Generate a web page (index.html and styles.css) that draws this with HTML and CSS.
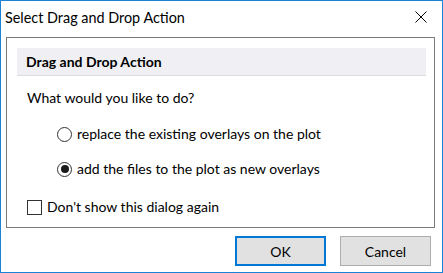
FILE: index.html
```html
<!DOCTYPE html>
<html lang="en">

<head>
  <meta charset="UTF-8">
  <title>Select Drag and Drop Action</title>
  <link rel="stylesheet" href="styles.css">
</head>

<body>
  <div class="window">
    <div class="titlebar">
      <span class="title">Select Drag and Drop Action</span>
      <svg class="close" width="12" height="12" viewBox="0 0 12 12">
        <path d="M0.5 0.5 L11.5 11.5 M11.5 0.5 L0.5 11.5" stroke="#000" stroke-width="1" fill="none" />
      </svg>
    </div>
    <div class="content">
      <div class="group">
        <div class="group-head">Drag and Drop Action</div>
        <p class="question">What would you like to do?</p>
        <label class="option first"><span class="radio"></span>replace the existing overlays on the plot</label>
        <label class="option second"><span class="radio checked"></span>add the files to the plot as new overlays</label>
        <label class="check"><span class="box"></span>Don't show this dialog again</label>
      </div>
      <div class="buttons">
        <button class="btn default">OK</button>
        <button class="btn">Cancel</button>
      </div>
    </div>
  </div>
</body>

</html>
```

FILE: styles.css
```css
body {
  margin: 0;
  font-family: Lato, "Open Sans", sans-serif;
  font-size: 14px;
  color: #000;
  background: #fff;
}
.window {
  width: 443px;
  height: 273px;
  box-sizing: border-box;
  border: 1px solid #1883d7;
  background: #fff;
  display: flex;
  flex-direction: column;
}
.titlebar {
  height: 36px;
  display: flex;
  align-items: center;
  justify-content: space-between;
  padding: 0 15px 0 4px;
}
.title {
  font-size: 14.4px;
  line-height: 20px;
  margin-top: -2px;
}
.close {
  display: block;
  margin-top: -4px;
}
.content {
  padding: 0 7px 0 5px;
  display: flex;
  flex-direction: column;
}
.group {
  height: 191px;
  box-sizing: border-box;
  border: 1px solid #7a7a7a;
  padding: 10px 8px 0 10px;
}
.group-head {
  height: 28px;
  box-sizing: border-box;
  background: #f0f0f4;
  border-bottom: 1px solid #dcdce0;
  font-weight: bold;
  line-height: 27px;
  padding-left: 9px;
}
.question {
  margin: 12px 0 0 10px;
  line-height: 20px;
}
.option,
.check {
  display: flex;
  align-items: center;
  height: 20px;
  line-height: 20px;
}
.option {
  padding-left: 40px;
}
.option.first {
  margin-top: 16px;
}
.option.second {
  margin-top: 15px;
}
.check {
  margin-top: 18px;
  padding-left: 10px;
}
.radio {
  width: 15px;
  height: 15px;
  box-sizing: border-box;
  border: 1px solid #333;
  border-radius: 50%;
  margin-right: 5px;
  display: flex;
  align-items: center;
  justify-content: center;
}
.radio.checked::after {
  content: "";
  width: 8px;
  height: 8px;
  border-radius: 50%;
  background: #1a1a1a;
}
.box {
  width: 15px;
  height: 15px;
  box-sizing: border-box;
  border: 1px solid #333;
  margin-right: 5px;
}
.buttons {
  display: flex;
  justify-content: flex-end;
  gap: 14px;
  margin-top: 8px;
  margin-right: 4px;
}
.btn {
  width: 91px;
  height: 30px;
  box-sizing: border-box;
  background: #e1e1e1;
  border: 1px solid #adadad;
  font-family: inherit;
  font-size: 14px;
  color: #000;
  padding: 0;
}
.btn.default {
  border: 2px solid #0078d7;
}
```
